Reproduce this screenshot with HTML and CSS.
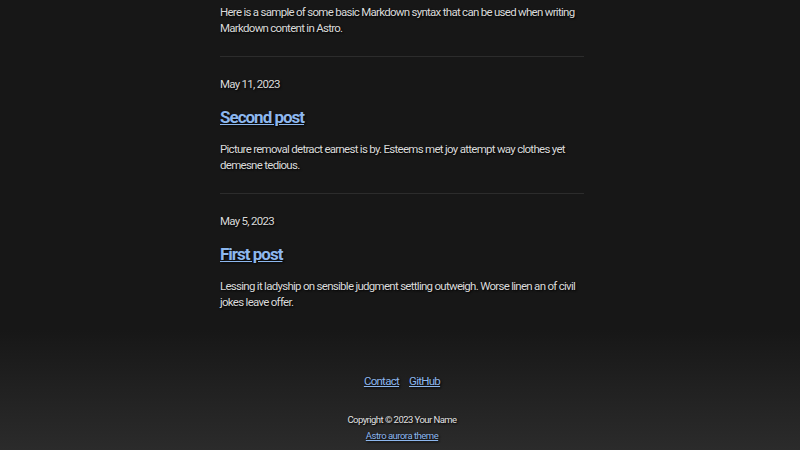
FILE: index.html
```html
<!DOCTYPE html>
<html lang="en">
<head>
<meta charset="utf-8">
<title>Blog</title>
<link rel="stylesheet" href="styles.css">
</head>
<body>
<main class="wrap">
  <article class="post first">
    <p class="desc">Here is a sample of some basic Markdown syntax that can be used when writing Markdown content in Astro.</p>
  </article>
  <article class="post">
    <div class="date">May 11, 2023</div>
    <h2 class="title"><a href="#">Second post</a></h2>
    <p class="desc">Picture removal detract earnest is by. Esteems met joy attempt way clothes yet demesne tedious.</p>
  </article>
  <article class="post last">
    <div class="date">May 5, 2023</div>
    <h2 class="title"><a href="#">First post</a></h2>
    <p class="desc">Lessing it ladyship on sensible judgment settling outweigh. Worse linen an of civil jokes leave offer.</p>
  </article>
</main>
<footer class="footer">
  <nav class="links"><a href="#">Contact</a><a href="#">GitHub</a></nav>
  <p class="copy">Copyright © 2023 Your Name</p>
  <a class="theme" href="#">Astro aurora theme</a>
</footer>
</body>
</html>
```
FILE: styles.css
```css
* { box-sizing: border-box; }
html, body { margin: 0; padding: 0; }
body {
  background: #171717;
  color: #dadada;
  font-family: Roboto, "Noto Sans", sans-serif;
  font-size: 11.5px;
  letter-spacing: -0.72px;
  line-height: 16px;
  text-shadow: 1px 1px 2px #000;
  min-height: 450px;
  display: flex;
  flex-direction: column;
}
a { color: #8db7ee; }
.wrap {
  width: 368px;
  margin: 0 auto;
  padding: 4px 0 0 4px;
}
.post {
  border-bottom: 1px solid #2c2c2c;
  padding: 19px 0 20px;
}
.post.first { padding-top: 0; }
.post.last { border-bottom: none; }
.date { line-height: 16px; }
.title {
  margin: 15px 0 14px;
  font-size: 17px;
  letter-spacing: -1px;
  line-height: 20px;
  font-weight: 700;
}
.desc { margin: 0; }
.footer {
  flex: 1;
  background: linear-gradient(#171717 0, #2b2b2b 100%);
  text-align: center;
  padding: 43px 0 0 4px;
  display: flex;
  flex-direction: column;
  align-items: center;
}
.links { display: flex; gap: 10px; line-height: 16px; }
.copy { margin: 25px 0 0; font-size: 9.5px; letter-spacing: -0.55px; line-height: 12px; color: #e0e0e0; }
.theme { margin-top: 4px; font-size: 9.5px; letter-spacing: -0.5px; line-height: 12px; }
```
